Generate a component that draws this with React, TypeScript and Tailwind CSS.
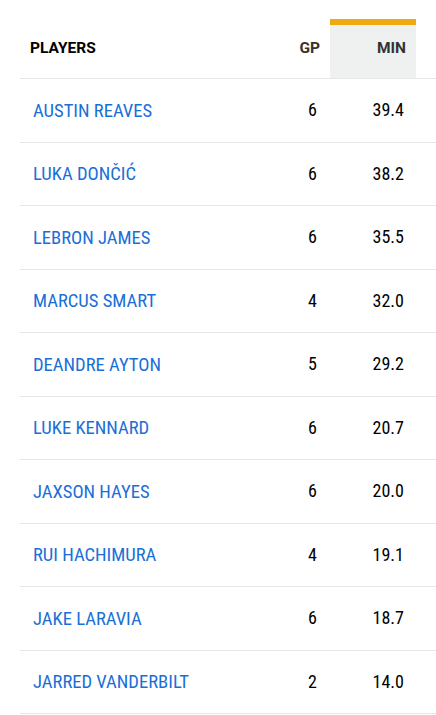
import React from "react";

const rows: [string, number, string][] = [
  ["AUSTIN REAVES", 6, "39.4"],
  ["LUKA DONČIĆ", 6, "38.2"],
  ["LEBRON JAMES", 6, "35.5"],
  ["MARCUS SMART", 4, "32.0"],
  ["DEANDRE AYTON", 5, "29.2"],
  ["LUKE KENNARD", 6, "20.7"],
  ["JAXSON HAYES", 6, "20.0"],
  ["RUI HACHIMURA", 4, "19.1"],
  ["JAKE LARAVIA", 6, "18.7"],
  ["JARRED VANDERBILT", 2, "14.0"],
];

export default function App() {
  return (
    <div className="w-[436px] h-[715px] bg-white pt-[19px] pl-5 overflow-hidden font-['Roboto',sans-serif]">
      <div className="flex h-[60px] border-b border-[#e6e6e6]">
        <div className="flex-1 flex items-center pl-[10px] text-[15.5px] font-bold text-black">PLAYERS</div>
        <div className="w-[60px] flex items-center justify-end pr-[10px] text-[15.5px] font-bold text-[#333]">GP</div>
        <div className="w-[86px] flex items-center justify-end pr-[10px] text-[15.5px] font-bold text-[#333] bg-[#eff0f0] border-t-[6px] border-[#efa913] pb-[6px]">MIN</div>
        <div className="w-[20px]" />
      </div>
      {rows.map(([name, gp, min]) => (
        <div key={name} className="flex h-[63.5px] border-b border-[#e6e6e6] items-center text-[18px] leading-[24px] font-stretch-condensed">
          <div className="flex-1 pl-[13px] pt-[1px] text-[18.6px] text-[#1a6fd7]">{name}</div>
          <div className="w-[60px] text-right pr-[13px] text-black">{gp}</div>
          <div className="w-[86px] text-right pr-[12px] text-black">{min}</div>
          <div className="w-[20px]" />
        </div>
      ))}
    </div>
  );
}
